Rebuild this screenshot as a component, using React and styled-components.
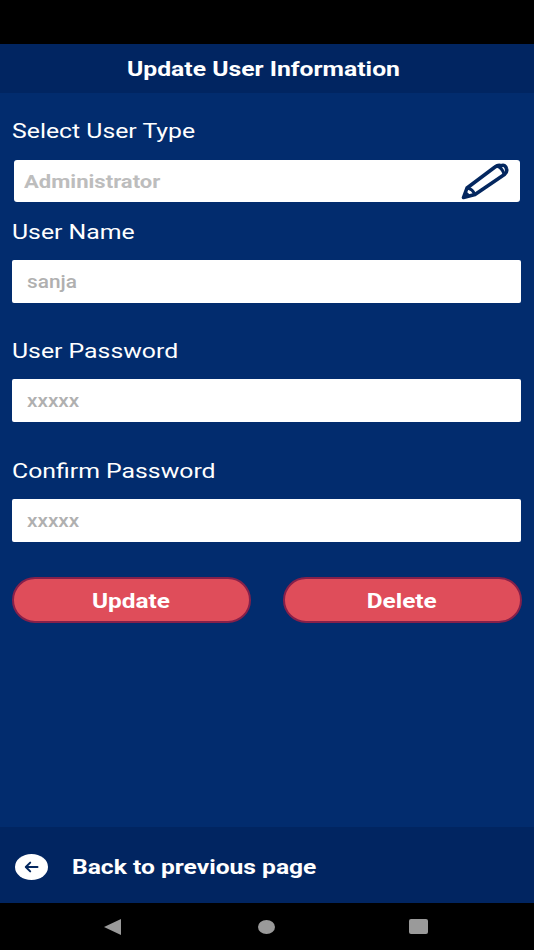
import React from 'react';
import styled, { createGlobalStyle } from 'styled-components';

const GlobalStyle = createGlobalStyle`
  * {
    box-sizing: border-box;
  }

  html,
  body {
    margin: 0;
    padding: 0;
    background: #000;
  }

  body {
    font-family: Roboto, 'Liberation Sans', sans-serif;
  }
`;

const PencilIcon = () => (
  <svg width="48" height="38" viewBox="0 0 48 38" fill="none" aria-hidden="true">
    <path
      d="M2.5 35.5 L6 26 L34 5 C36 3.4 38 3 40 3.6 C43 2.4 45 4 45.4 6.6 C46.4 9.4 45.4 11 43.4 12.6 L14 32.5 Z"
      stroke="#04275f"
      strokeWidth="3.6"
      strokeLinejoin="round"
    />
    <path d="M6 26 C9.5 26.5 12.6 29 14 33" stroke="#04275f" strokeWidth="3" />
    <path d="M2 36 L4.4 29 C6.6 30 8.4 32 9.4 34 Z" fill="#04275f" />
    <path d="M36 4 C39.4 5 41.8 8 43 12" stroke="#04275f" strokeWidth="3" />
  </svg>
);

const BackIcon = () => (
  <svg width="15" height="12" viewBox="0 0 15 12" fill="none" aria-hidden="true">
    <path
      d="M13.5 6 H2 M6.2 1.6 L1.8 6 L6.2 10.4"
      stroke="#04275f"
      strokeWidth="2"
      strokeLinecap="round"
      strokeLinejoin="round"
    />
  </svg>
);

const fields = [
  { label: 'User Name', value: 'sanja', top: 18 },
  { label: 'User Password', value: 'xxxxx', top: 36 },
  { label: 'Confirm Password', value: 'xxxxx', top: 37 },
];

export default function App() {
  return (
    <>
      <GlobalStyle />
      <Screen>
        <StatusBar />
        <Header>
          <Wide $scale={1.236} $origin="center">Update User Information</Wide>
        </Header>
        <Main>
          <TypeLabel>
            <Wide $scale={1.21}>Select User Type</Wide>
          </TypeLabel>
          <SelectBox>
            <SelectValue>
              <Wide $scale={1.225}>Administrator</Wide>
            </SelectValue>
            <PencilIcon />
          </SelectBox>
          {fields.map((field) => (
            <Field key={field.label} $top={field.top}>
              <Label>
                <Wide $scale={1.21}>{field.label}</Wide>
              </Label>
              <InputBox>
                <Wide $scale={1.155}>{field.value}</Wide>
              </InputBox>
            </Field>
          ))}
          <Actions>
            <ActionButton type="button">
              <Wide $scale={1.22} $origin="center">Update</Wide>
            </ActionButton>
            <ActionButton type="button">
              <Wide $scale={1.22} $origin="center">Delete</Wide>
            </ActionButton>
          </Actions>
        </Main>
        <Footer>
          <BackCircle>
            <BackIcon />
          </BackCircle>
          <BackText>
            <Wide $scale={1.23}>Back to previous page</Wide>
          </BackText>
        </Footer>
        <NavBar>
          <NavBack />
          <NavHome />
          <NavRecent />
        </NavBar>
      </Screen>
    </>
  );
}

// the screenshot is stretched sideways, so the text is too
const Wide = styled.span`
  display: inline-block;
  transform: scaleX(${(p) => p.$scale});
  transform-origin: ${(p) => p.$origin || 'left'} center;
`;

const Screen = styled.div`
  width: 534px;
  height: 950px;
  display: flex;
  flex-direction: column;
  overflow: hidden;
  background: #022c6e;
`;

const StatusBar = styled.div`
  height: 44px;
  background: #000;
`;

const Header = styled.h1`
  height: 49px;
  margin: 0;
  display: flex;
  align-items: center;
  justify-content: center;
  padding: 1px 8px 0 0;
  background: #012561;
  color: #fff;
  font-size: 20px;
  font-weight: 700;
`;

const Main = styled.main`
  flex: 1;
  padding: 0 12px;
  display: flex;
  flex-direction: column;
`;

const Label = styled.div`
  height: 24px;
  line-height: 24px;
  color: #fff;
  font-size: 20.5px;
`;

const TypeLabel = styled(Label)`
  margin-top: 26px;
`;

const SelectBox = styled.div`
  height: 42px;
  margin: 17px 2px 0 2px;
  padding: 0 11px 0 10px;
  display: flex;
  align-items: center;
  justify-content: space-between;
  background: #fff;
  border-radius: 3px;
`;

const SelectValue = styled.span`
  color: #bdbdbd;
  font-size: 18px;
  font-weight: 700;
`;

const Field = styled.div`
  display: flex;
  flex-direction: column;
  gap: 16px;
  margin-top: ${(p) => p.$top}px;
`;

const InputBox = styled.div`
  height: 43px;
  margin-right: 1px;
  padding: 0 15px;
  display: flex;
  align-items: center;
  background: #fff;
  border-radius: 2px;
  color: #b0b0b0;
  font-size: 18px;
  font-weight: 500;
`;

const Actions = styled.div`
  display: flex;
  justify-content: space-between;
  margin-top: 35px;
`;

const ActionButton = styled.button`
  width: 239px;
  height: 46px;
  padding: 1px 2px 0 0;
  background: #df4d5a;
  border: 2px solid #86204a;
  border-radius: 23px;
  color: #fff;
  font-family: inherit;
  font-size: 20px;
  font-weight: 700;
`;

const Footer = styled.footer`
  height: 76px;
  padding: 4px 0 0 15px;
  display: flex;
  align-items: center;
  background: #012561;
`;

const BackCircle = styled.span`
  width: 33px;
  height: 26px;
  display: flex;
  align-items: center;
  justify-content: center;
  background: #fff;
  border-radius: 50%;
`;

const BackText = styled.span`
  margin-left: 24px;
  color: #fff;
  font-size: 20px;
  font-weight: 700;
`;

const NavBar = styled.nav`
  height: 47px;
  display: flex;
  align-items: center;
  background: #000;
  padding: 0 0 0 104px;
`;

const NavBack = styled.span`
  width: 0;
  height: 0;
  border-top: 8px solid transparent;
  border-bottom: 8px solid transparent;
  border-right: 17px solid #9a9a9a;
`;

const NavHome = styled.span`
  width: 17px;
  height: 14px;
  margin-left: 137px;
  border-radius: 50%;
  background: #9a9a9a;
`;

const NavRecent = styled.span`
  width: 19px;
  height: 15px;
  margin-left: 134px;
  border-radius: 2px;
  background: #9a9a9a;
`;
